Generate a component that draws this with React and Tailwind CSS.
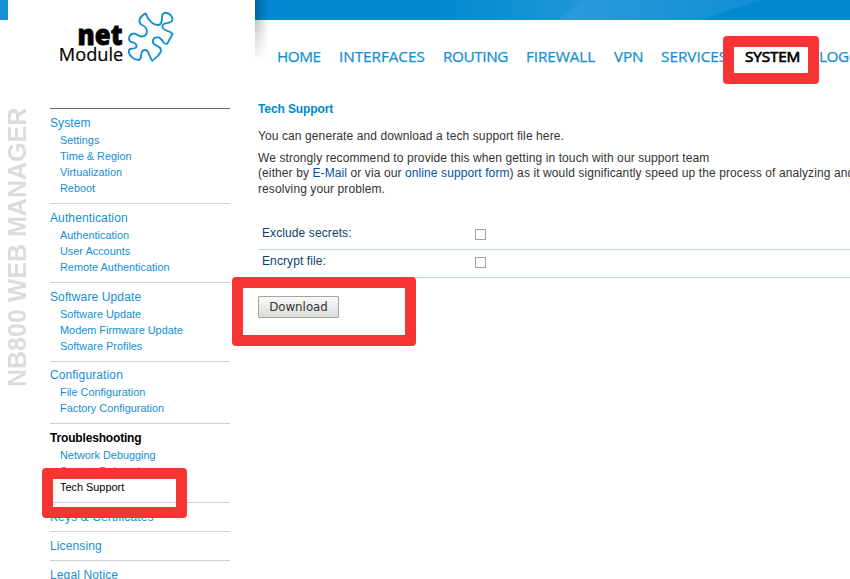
import { useState } from "react";

const navItems = [
  { label: "HOME", style: "w-[62px] tracking-[-0.45px]" },
  { label: "INTERFACES", style: "w-[104px] tracking-[-0.05px]" },
  { label: "ROUTING", style: "w-[83px] tracking-[-0.4px]" },
  { label: "FIREWALL", style: "w-[88px] tracking-[-0.1px]" },
  { label: "VPN", style: "w-[47px] tracking-[-0.2px]" },
  { label: "SERVICES", style: "w-[84px]" },
  { label: "SYSTEM", style: "w-[74px] tracking-[-0.15px] text-black [-webkit-text-stroke:0.7px]" },
  { label: "LOGOUT", style: "w-[70px] tracking-[-0.4px]" },
];

const menu = [
  { title: "System", items: ["Settings", "Time & Region", "Virtualization", "Reboot"] },
  { title: "Authentication", items: ["Authentication", "User Accounts", "Remote Authentication"] },
  { title: "Software Update", items: ["Software Update", "Modem Firmware Update", "Software Profiles"] },
  { title: "Configuration", items: ["File Configuration", "Factory Configuration"], pad: "pt-[5px] pb-[7px]" },
  { title: "Troubleshooting", items: ["Network Debugging", "System Debugging", "Tech Support"] },
  { title: "Keys & Certificates", items: [], pad: "pt-[6px] pb-[5px]" },
  { title: "Licensing", items: [], pad: "pt-[6px] pb-[5px]" },
  { title: "Legal Notice", items: [], pad: "pt-[6px] pb-[5px]" },
];

function Logo() {
  return (
    <svg width="247" height="90" viewBox="8 0 247 90" className="block font-['Open_Sans',sans-serif]">
      <text x="77.5" y="45" textLength="45" lengthAdjust="spacingAndGlyphs" fontSize="27.5" fontWeight="800" stroke="#000" strokeWidth="0.8">net</text>
      <text x="58.8" y="60.5" textLength="64.500" lengthAdjust="spacingAndGlyphs" fontSize="18.8" stroke="#000" strokeWidth="0.2">Module</text>
      <path
        d="M145.6 13.4C140 16 137 22 142 25C149 28 148 36 142 36.5C138 37 137 33 133.500 33.500C129 34 127.500 40 131 42C134 42.500 138 44 136 47.500C134 50 129 47 128.800 51C129 56 134 60 139 60C143 58 139 54 143 50.500C149 48 148.500 56 152.300 60.700C156 57 161 55 161 50C160 45 155 47 153 42.500C152 37 158 36 161 39C164 42 163 45 167.500 43.500C169 40 171 37 172.600 34C169 29 163 32 162.300 26.500C163 21 169 25 172 21C174 16 168 12 164 13C160 15 164 21 160 24.500C154 27 148 20 145.600 13.400Z"
        fill="none"
        stroke="#138fd3"
        strokeWidth="1.9"
        strokeLinejoin="round"
      />
    </svg>
  );
}

function Header() {
  return (
    <header className="flex h-[90px]">
      <div className="h-5 w-2 shrink-0 bg-[#138fd3]" />
      <div className="w-[247px] shrink-0">
        <Logo />
      </div>
      <div className="relative w-[595px] shrink-0">
        <svg width="595" height="20" viewBox="255 0 595 20" className="block">
          <defs>
            <linearGradient id="glow" x1="440" x2="590" y1="0" y2="0" gradientUnits="userSpaceOnUse">
              <stop offset="0" stopColor="#0089d1" />
              <stop offset="1" stopColor="#2197d8" />
            </linearGradient>
            <linearGradient id="wave" x1="558" x2="740" y1="0" y2="0" gradientUnits="userSpaceOnUse">
              <stop offset="0" stopColor="#2c9bda" />
              <stop offset="1" stopColor="#128fd4" />
            </linearGradient>
          </defs>
          <rect x="255" width="595" height="20" fill="#0089d1" />
          <path d="M400 0H600V20H400Z" fill="url(#glow)" />
          <path d="M587 0H764Q732 8 702 20H558Q570 9 587 0Z" fill="url(#wave)" />
        </svg>
        <div className="absolute top-0 left-0 h-[62px] w-[14px] bg-linear-to-r from-black/25 to-transparent mask-b-from-30% mask-b-to-100%" />
        <nav className="mt-[26px] ml-[22px] flex font-['Open_Sans',sans-serif] text-[15.3px] leading-5 font-medium text-[#138fd3] [-webkit-text-stroke:0.25px]">
          {navItems.map((item) => (
            <a key={item.label} className={`${item.style} shrink-0 whitespace-nowrap`}>
              {item.label}
            </a>
          ))}
        </nav>
      </div>
    </header>
  );
}

function Sidebar() {
  return (
    <aside className="mt-[18px] w-[180px] shrink-0 text-[#138fd3]">
      {menu.map((section, i) => (
        <section
          key={section.title}
          className={`border-t ${i === 0 ? "border-[#636b7b]" : "border-[#cfd0d3]"} ${section.pad || "pt-[6px] pb-[7px]"}`}
        >
          <h2 className={`h-[17px] text-[12px] leading-4 ${section.title === "Troubleshooting" ? "font-bold tracking-[-0.17px] text-black" : "tracking-[0.12px]"}`}>
            {section.title}
          </h2>
          {section.items.map((item) => (
            <a key={item} className={`block h-4 pl-[10px] text-[10.9px] leading-4 ${item === "Tech Support" ? "text-black" : ""}`}>
              {item}
            </a>
          ))}
        </section>
      ))}
    </aside>
  );
}

function OptionRow({ label, checked, onChange }) {
  return (
    <label className="flex h-[28px] items-start border-b border-[#b3d9ee] pl-1 text-[#0a4269]">
      <span className="w-[213px] pt-[3px]">{label}</span>
      <input
        type="checkbox"
        checked={checked}
        onChange={onChange}
        className="mt-[7px] h-[11px] w-[11px] appearance-none border border-[#a5a29b] bg-white checked:bg-[#138fd3]"
      />
    </label>
  );
}

export default function App() {
  const [exclude, setExclude] = useState(false);
  const [encrypt, setEncrypt] = useState(false);

  return (
    <div className="relative h-[579px] w-[850px] overflow-hidden bg-white font-['Liberation_Sans',Arial,sans-serif]">
      <Header />
      <div className="flex">
        <div className="mt-[17px] w-[50px] shrink-0 pl-[2px]">
          <div className="h-[280px] w-[30px] rotate-180 text-[25px] leading-[30px] font-bold whitespace-nowrap text-[#dadce1] [writing-mode:vertical-rl]">
            NB800 WEB MANAGER
          </div>
        </div>
        <Sidebar />
        <main className="ml-7 w-[620px] shrink-0 pt-[11px] text-[12px] leading-4 tracking-[0.1px] text-[#333]">
          <h1 className="font-bold tracking-[-0.1px] text-[#0089d1]">Tech Support</h1>
          <p className="mt-[11px]">You can generate and download a tech support file here.</p>
          <p className="mt-[6.7px] leading-[15.5px] whitespace-nowrap">
            We strongly recommend to provide this when getting in touch with our support team
            <br />
            (either by <a className="text-[#0052a5]">E-Mail</a> or via our <a className="text-[#0052a5]">online support form</a>) as it would significantly speed up the process of analyzing and
            <br />
            resolving your problem.
          </p>
          <div className="mt-[24.8px]">
            <OptionRow label="Exclude secrets:" checked={exclude} onChange={() => setExclude(!exclude)} />
            <OptionRow label="Encrypt file:" checked={encrypt} onChange={() => setEncrypt(!encrypt)} />
          </div>
          <button className="mt-[18px] flex h-[22px] w-[81px] items-center justify-center rounded-[1px] border border-[#a5a498] bg-linear-to-b from-[#fafafa] to-[#dcdcd9] font-['DejaVu_Sans',sans-serif] text-[11.8px] tracking-normal text-[#333]">
            Download
          </button>
        </main>
      </div>

      <div className="absolute top-[36px] left-[723px] h-[48px] w-[96px] rounded-[4px] border-[11px] border-[#f73434]" />
      <div className="absolute top-[277px] left-[232px] h-[69px] w-[184px] rounded-[4px] border-[11px] border-[#f73434]" />
      <div className="absolute top-[468px] left-[42px] h-[50px] w-[145px] rounded-[4px] border-[11px] border-[#f73434]" />
    </div>
  );
}
